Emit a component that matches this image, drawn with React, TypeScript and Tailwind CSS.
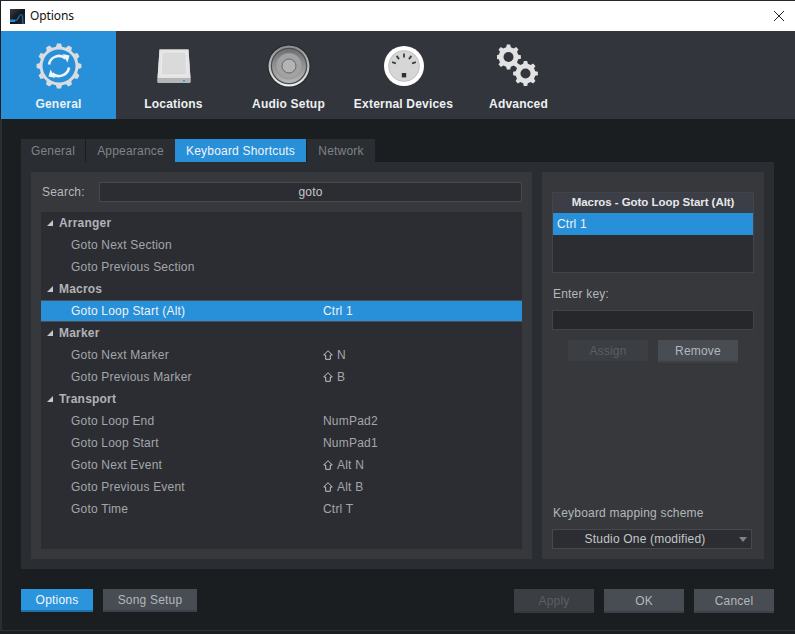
import React from 'react';

// builds a closed gear outline centred on 0,0
const gearPath = (teeth: number, outer: number, inner: number) => {
  const pts: string[] = [];
  const step = (Math.PI * 2) / teeth;
  for (let i = 0; i < teeth; i++) {
    const a = i * step - Math.PI / 2;
    const corners: [number, number][] = [
      [a - step * 0.3, inner],
      [a - step * 0.17, outer],
      [a + step * 0.17, outer],
      [a + step * 0.3, inner],
    ];
    corners.forEach(([t, r]) => pts.push(`${(Math.cos(t) * r).toFixed(2)} ${(Math.sin(t) * r).toFixed(2)}`));
  }
  return `M${pts.join('L')}Z`;
};

const AppLogo = () => (
  <svg width="15" height="15" viewBox="0 0 15 15" className="shrink-0">
    <defs>
      <linearGradient id="logoBg" x1="0" y1="0" x2="1" y2="1">
        <stop offset="0" stopColor="#3a3f46" />
        <stop offset="0.5" stopColor="#14171c" />
        <stop offset="1" stopColor="#20242a" />
      </linearGradient>
    </defs>
    <rect width="15" height="15" fill="url(#logoBg)" />
    <path d="M0 10.500h5v2.500H0z" fill="#1f8fe0" />
    <path d="M5 11.500c2.500 0 3-2 4-4 .8-1.500 2-2.500 3-1.500 1 1.500.5 6 1 9" fill="none" stroke="#1668b0" strokeWidth="1.300" />
  </svg>
);

const GeneralIcon = () => (
  <svg width="46" height="46" viewBox="-23 -23 46 46">
    <path d={gearPath(12, 22.500, 19.500)} fill="#d9dde0" />
    <circle r="16.500" fill="#2790d8" />
    <path d="M-10 -1.500A10 10 0 0 1 6.500 -7.500" fill="none" stroke="#f2f5f7" strokeWidth="2.600" />
    <path d="M3.500 -12L10.500 -10.500L8.500 -3.500Z" fill="#f2f5f7" />
    <path d="M10 1.500A10 10 0 0 1 -6.500 7.500" fill="none" stroke="#f2f5f7" strokeWidth="2.600" />
    <path d="M-3.500 12L-10.500 10.500L-8.500 3.500Z" fill="#f2f5f7" />
  </svg>
);

const DriveIcon = () => (
  <svg width="36" height="36" viewBox="0 0 36 36">
    <path d="M3.500 1.500h29l2 29.500v2.500a1.500 1.500 0 0 1-1.500 1.500H3a1.500 1.500 0 0 1-1.500-1.500V31z" fill="#c9cacb" />
    <path d="M3.500 1.500h29l2 28.500h-33z" fill="#e4e4e4" />
    <path d="M6 4h24l1 23H5z" fill="#dadada" stroke="#f0f0f0" strokeWidth="0.800" />
    <rect x="1.500" y="30" width="33" height="5" rx="1.500" fill="#b4b6b8" />
    <rect x="27" y="32" width="2" height="1.500" fill="#2e9bd8" />
  </svg>
);

const SpeakerIcon = () => (
  <svg width="44" height="44" viewBox="-22 -22 44 44">
    <defs>
      <linearGradient id="spkRim" x1="0" y1="0" x2="0" y2="1">
        <stop offset="0" stopColor="#8c8c8c" />
        <stop offset="1" stopColor="#f0f0f0" />
      </linearGradient>
      <linearGradient id="spkCone" x1="0" y1="0" x2="0" y2="1">
        <stop offset="0" stopColor="#6d6e70" />
        <stop offset="1" stopColor="#b6b6b6" />
      </linearGradient>
    </defs>
    <circle r="21.500" fill="#222427" />
    <circle r="20.500" fill="url(#spkRim)" />
    <circle r="18.300" fill="#4c4e51" />
    <circle r="17" fill="url(#spkCone)" />
    <circle r="13" fill="#a2a2a2" stroke="#8b8b8c" strokeWidth="0.600" />
    <circle r="7" fill="#b4b4b4" stroke="#66686a" strokeWidth="1" />
  </svg>
);

const MidiIcon = () => (
  <svg width="40" height="40" viewBox="-20 -20 40 40">
    <circle r="20" fill="#ffffff" />
    <circle r="15.500" fill="#d6d6d6" stroke="#9fa1a3" strokeWidth="0.500" />
    {[-72, -36, 0, 36, 72].map((a) => (
      <rect key={a} x="-0.900" y="-12.500" width="1.800" height="4" fill="#3b3d40" transform={`rotate(${a})`} />
    ))}
    <rect x="-2.200" y="7" width="4.400" height="4.400" fill="#2e3034" />
  </svg>
);

const GearsIcon = () => (
  <svg width="44" height="44" viewBox="0 0 44 44">
    <g transform="translate(11.500 13)">
      <path d={gearPath(8, 12.500, 10)} fill="#e2e2e2" />
      <circle r="5" fill="#32363c" />
    </g>
    <g transform="translate(28.500 29.500)">
      <path d={gearPath(8, 12.500, 10)} fill="#e2e2e2" />
      <circle r="5" fill="#32363c" />
    </g>
  </svg>
);

const NavItem = ({ label, active, children }: { label: string; active?: boolean; children: React.ReactNode }) => (
  <div className={`w-[115px] ${active ? 'bg-[#2790d8]' : ''} h-full flex flex-col items-center`}>
    <div className="h-[65px] flex items-center justify-center pt-[5px]">{children}</div>
    <span className="text-[12px] font-bold text-[#eef0f2] leading-[16px] whitespace-nowrap">{label}</span>
  </div>
);

const Tab = ({ label, width, active }: { label: string; width: string; active?: boolean }) => (
  <div className={`${width} h-[23px] flex items-center justify-center text-[12px] ${active ? 'bg-[#2790d8] text-[#f2f4f6]' : 'bg-[#2a2d31] text-[#808387]'}`}>
    {label}
  </div>
);

const Button = ({ label, width, tone = 'normal', tall }: { label: string; width: string; tone?: 'normal' | 'disabled' | 'blue'; tall?: boolean }) => {
  const tones = {
    normal: 'bg-[#484c53] border-[#3d4046] text-[#b4b7bb]',
    disabled: 'bg-[#3b3e43] border-[#35383c] text-[#5c5f64]',
    blue: 'bg-[#2a94dc] border-[#1f6fa8] text-[#f2f6fa]',
  };
  return (
    <div className={`${width} ${tall ? 'h-[24px] pt-[1px]' : 'h-[23px]'} ${tones[tone]} border-b-2 flex items-center justify-center text-[12px]`}>
      {label}
    </div>
  );
};

// outlined shift arrow, as the app shows it in key names
const Shift = () => (
  <svg width="10" height="10" viewBox="0 0 10 10" className="mr-[4px]">
    <path d="M5 .7L9.300 5H7.300V9.300H2.700V5H.7Z" fill="none" stroke="#c2c5c9" strokeWidth="1" />
  </svg>
);

type Row = { group?: string; name?: string; keys?: React.ReactNode; selected?: boolean };

const rows: Row[] = [
  { group: 'Arranger' },
  { name: 'Goto Next Section' },
  { name: 'Goto Previous Section' },
  { group: 'Macros' },
  { name: 'Goto Loop Start (Alt)', keys: 'Ctrl 1', selected: true },
  { group: 'Marker' },
  { name: 'Goto Next Marker', keys: <><Shift />N</> },
  { name: 'Goto Previous Marker', keys: <><Shift />B</> },
  { group: 'Transport' },
  { name: 'Goto Loop End', keys: 'NumPad2' },
  { name: 'Goto Loop Start', keys: 'NumPad1' },
  { name: 'Goto Next Event', keys: <><Shift />Alt N</> },
  { name: 'Goto Previous Event', keys: <><Shift />Alt B</> },
  { name: 'Goto Time', keys: 'Ctrl T' },
];

const ShortcutRow = ({ row }: { row: Row }) => {
  if (row.group) {
    return (
      <div className="h-[22px] flex items-center text-[12px] font-bold text-[#b0b3b7]">
        <svg width="6" height="6" viewBox="0 0 6 6" className="ml-[6px] mr-[6px]">
          <path d="M6 0v6H0z" fill="#c4c6c9" />
        </svg>
        {row.group}
      </div>
    );
  }
  return (
    <div className={`h-[22px] flex items-center text-[12px] pl-[30px] ${row.selected ? 'bg-[#2790d8] border-y border-[#4a4d52] text-[#eef2f5]' : 'text-[#a3a6ab]'}`}>
      <span className="w-[252px]">{row.name}</span>
      <span className="flex items-center">{row.keys}</span>
    </div>
  );
};

export default function App() {
  return (
    <div className="w-[795px] h-[634px] flex flex-col bg-[#1b1e21] font-['Liberation_Sans',Arial,sans-serif] tracking-[0.2px] overflow-hidden">
      <div className="h-[1px] bg-[#25272b]" />

      {/* title bar */}
      <div className="h-[30px] bg-white flex items-center pl-[9px] pr-[9px] ml-[1px]">
        <AppLogo />
        <span className="ml-[5px] text-[12px] tracking-[-0.1px] text-[#111] font-['Noto_Sans',sans-serif]">Options</span>
        <svg width="12" height="12" viewBox="0 0 12 12" className="ml-auto mr-[1px]">
          <path d="M1 1l10 10M11 1L1 11" stroke="#222" strokeWidth="1" />
        </svg>
      </div>

      {/* top nav */}
      <div className="h-[88px] bg-[#32363c] flex ml-[1px]">
        <NavItem label="General" active><GeneralIcon /></NavItem>
        <NavItem label="Locations"><DriveIcon /></NavItem>
        <NavItem label="Audio Setup"><SpeakerIcon /></NavItem>
        <NavItem label="External Devices"><MidiIcon /></NavItem>
        <NavItem label="Advanced"><GearsIcon /></NavItem>
      </div>

      {/* body */}
      <div className="flex-1 flex flex-col pl-[19px] pr-[21px] pt-[20px] border-l-[2px] border-[#2a2d31]">
        <div className="flex">
          <Tab label="General" width="w-[64px]" />
          <Tab label="Appearance" width="w-[89px] ml-[1px]" />
          <Tab label="Keyboard Shortcuts" width="w-[131px]" active />
          <Tab label="Network" width="w-[68px] ml-[1px]" />
        </div>

        <div className="w-[753px] h-[407px] bg-[#2a2d31] p-[10px] flex gap-[10px]">
          {/* shortcut list */}
          <div className="w-[501px] h-[387px] bg-[#36383c] p-[10px] flex flex-col">
            <div className="h-[20px] flex items-center">
              <span className="w-[58px] text-[12px] text-[#b4b7bb] pl-[1px]">Search:</span>
              <div className="flex-1 h-[20px] bg-[#2c2d32] border border-[#47494e] flex items-center justify-center text-[12px] text-[#c4c6c9]">
                goto
              </div>
            </div>
            <div className="mt-[10px] flex-1 bg-[#2c2d32]">
              {rows.map((r) => (
                <ShortcutRow key={r.group ?? r.name} row={r} />
              ))}
            </div>
          </div>

          {/* key assignment */}
          <div className="w-[222px] h-[387px] bg-[#36383c] px-[10px] pt-[20px] flex flex-col">
            <div className="w-[202px] h-[81px] border border-[#42444a] bg-[#2c2d32] flex flex-col">
              <div className="h-[20px] bg-[#3b3e46] flex items-center justify-center text-[11.5px] tracking-[-0.05px] font-bold text-[#e6e8ea]">
                Macros - Goto Loop Start (Alt)
              </div>
              <div className="h-[22px] bg-[#2790d8] flex items-center pl-[4px] text-[12px] text-[#eef2f5]">Ctrl 1</div>
            </div>
            <span className="mt-[14px] pl-[1px] text-[12px] leading-[14px] text-[#b4b7bb]">Enter key:</span>
            <div className="mt-[9px] w-[202px] h-[20px] bg-[#26272b] border border-[#42444a]" />
            <div className="mt-[10px] flex justify-center gap-[10px]">
              <Button label="Assign" width="w-[80px]" tone="disabled" />
              <Button label="Remove" width="w-[80px]" />
            </div>
            <span className="mt-auto pl-[1px] text-[12px] leading-[14px] text-[#b4b7bb]">Keyboard mapping scheme</span>
            <div className="mt-[9px] mb-[10px] w-[200px] h-[20px] bg-[#2c2d32] border border-[#47494e] flex items-center text-[12px] text-[#c4c6c9] relative">
              <span className="w-full text-center pr-[14px]">Studio One (modified)</span>
              <svg width="8" height="5" viewBox="0 0 8 5" className="absolute right-[4px] top-[7px]">
                <path d="M0 0h8L4 5z" fill="#7f8286" />
              </svg>
            </div>
          </div>
        </div>

        {/* footer */}
        <div className="mt-[20px] w-[753px] flex">
          <Button label="Options" width="w-[72px]" tone="blue" />
          <div className="ml-[10px]"><Button label="Song Setup" width="w-[94px]" /></div>
          <div className="ml-auto flex gap-[10px]">
            <Button label="Apply" width="w-[80px]" tone="disabled" tall />
            <Button label="OK" width="w-[80px]" tall />
            <Button label="Cancel" width="w-[80px]" tall />
          </div>
        </div>
      </div>
      <div className="h-[4px] border-t border-[#2f3236] bg-[#1b1e21]" />
    </div>
  );
}
